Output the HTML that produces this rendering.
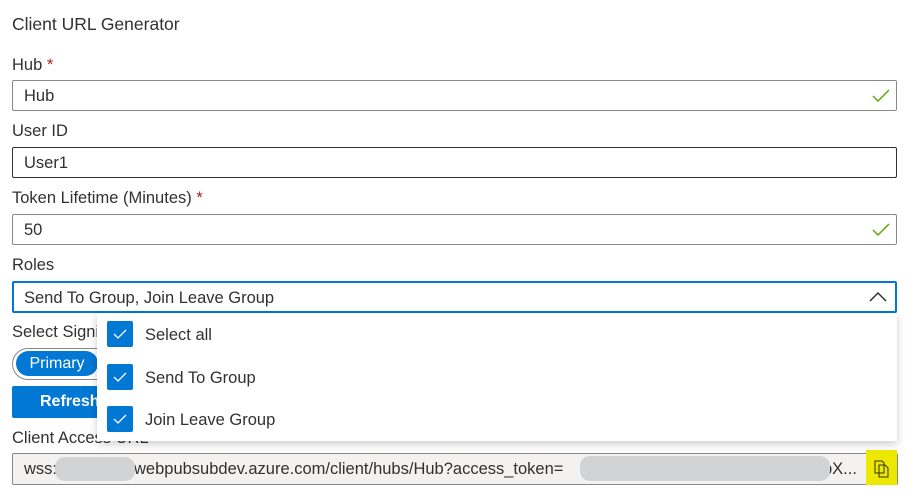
<!DOCTYPE html>
<html><head><style>
body{margin:0;width:916px;height:504px;background:#fff;font-family:"Liberation Sans",sans-serif;color:#323130;position:relative;overflow:hidden}
.a{position:absolute}
.lbl{font-size:16.5px;left:12px}
.inp{left:12px;width:883px;height:29px;border:1px solid #8a8886;border-radius:2px;font-size:16.5px;line-height:31px;box-sizing:content-box}
.inp span{padding-left:11px}
.req{color:#a4262c}
.ok{position:absolute;right:6px;top:7px}
.cb{left:107px;width:26px;height:26px;background:#0078d4;border-radius:2px}
.it{left:145px;font-size:16.5px}
</style></head><body>
<div class="a lbl" style="top:14px;font-size:17.5px">Client URL Generator</div>
<div class="a lbl" style="top:56px">Hub <span class="req">*</span></div>
<div class="a inp" style="top:80px"><span>Hub</span><svg class="ok" width="18" height="16"><path d="M1 8l5 5L17 2" stroke="#57a300" stroke-width="1.4" fill="none"/></svg></div>
<div class="a lbl" style="top:122px">User ID</div>
<div class="a inp" style="top:147px;border-color:#323130"><span>User1</span></div>
<div class="a lbl" style="top:189px">Token Lifetime (Minutes) <span class="req">*</span></div>
<div class="a inp" style="top:214px"><span>50</span><svg class="ok" width="18" height="16"><path d="M1 8l5 5L17 2" stroke="#57a300" stroke-width="1.4" fill="none"/></svg></div>
<div class="a lbl" style="top:256px">Roles</div>
<div class="a inp" style="top:281px;border:2px solid #0078d4;width:881px;height:28px;line-height:30px"><span style="padding-left:10px">Send To Group, Join Leave Group</span><svg style="position:absolute;right:8px;top:8px" width="18" height="12"><path d="M1 10l8-8 8 8" stroke="#323130" stroke-width="1.5" fill="none"/></svg></div>
<div class="a lbl" style="top:323px">Select Signing Key</div>
<div class="a" style="left:12px;top:348px;width:110px;height:30px;border:1px solid #8a8886;border-radius:16px"></div>
<div class="a" style="left:16px;top:351px;width:82px;height:25px;background:#0078d4;border-radius:13px;color:#fff;font-size:16px;line-height:26px;text-align:center">Primary</div>
<div class="a" style="left:12px;top:386px;width:140px;height:32px;background:#0078d4;border-radius:2px;color:#fff;font-weight:bold;font-size:16px;line-height:32px;padding-left:28px;box-sizing:border-box">Refresh</div>
<div class="a lbl" style="top:429px">Client Access URL</div>
<div class="a inp" style="top:453px;height:30px;line-height:31px;background:#f3f2f1;border-color:#8a8886;color:#323130;width:884px"><span>wss:/</span><span style="position:absolute;left:121px;padding:0">webpubsubdev.azure.com/client/hubs/Hub?access_token=</span><span style="position:absolute;left:810px;padding:0">pX...</span></div>
<div class="a" style="left:55px;top:457px;width:80px;height:24px;background:#d2d3d5;border-radius:10px"></div>
<div class="a" style="left:580px;top:456px;width:250px;height:25px;background:#d2d3d5;border-radius:10px"></div>
<div class="a" style="left:866px;top:450px;width:31px;height:35px;background:#ece800"></div>
<svg class="a" style="left:874px;top:460px" width="16" height="18"><path d="M1 1h7l2 2v10H1z M5 5h6l3 3v9H5z" stroke="#323130" fill="none" stroke-width="1"/></svg>
<div class="a" style="left:97px;top:313px;width:800px;height:128px;background:#fff;box-shadow:0 3px 8px rgba(0,0,0,.2)"></div>
<div class="a cb" style="top:321px"></div>
<div class="a cb" style="top:364px"></div>
<div class="a cb" style="top:406px"></div>
<svg class="a" style="left:107px;top:321px" width="26" height="112"><g stroke="#fff" stroke-width="1.3" fill="none"><path d="M7 13l4 4 8-8"/><path d="M7 56l4 4 8-8"/><path d="M7 98l4 4 8-8"/></g></svg>
<div class="a it" style="top:326px">Select all</div>
<div class="a it" style="top:369px">Send To Group</div>
<div class="a it" style="top:411px">Join Leave Group</div>
</body></html>
